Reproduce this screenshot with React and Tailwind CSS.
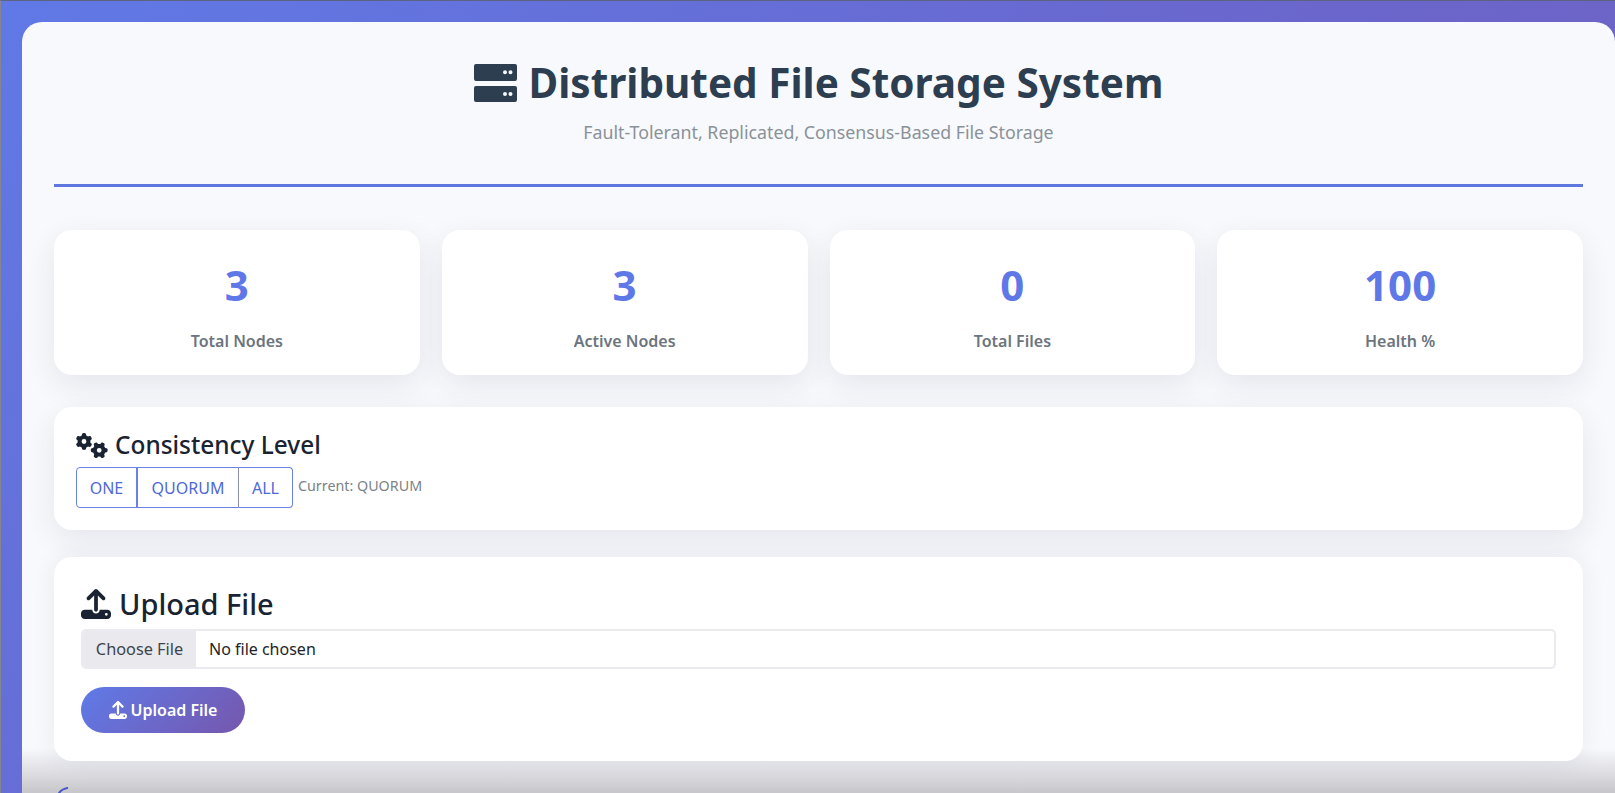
import React from "react";
import { FaGears, FaUpload } from "react-icons/fa6";

const stats = [
  ["3", "Total Nodes"],
  ["3", "Active Nodes"],
  ["0", "Total Files"],
  ["100", "Health %"],
];

const levels = [
  ["ONE", "w-[61px] rounded-l-[4px]"],
  ["QUORUM", "w-[103px] border-l-2 -ml-px"],
  ["ALL", "w-[55px] rounded-r-[4px] border-l-[#8a8fa8] -ml-px"],
];

function ServerIcon() {
  return (
    <svg className="h-[38px] w-[43px] shrink-0" viewBox="0 0 43 38" fill="currentColor">
      <path fillRule="evenodd" d="M2 0h39a2 2 0 0 1 2 2v13a2 2 0 0 1-2 2H2a2 2 0 0 1-2-2V2a2 2 0 0 1 2-2Zm29 6.2a2 2 0 1 0 0 4 2 2 0 0 0 0-4Zm5.5 0a2 2 0 1 0 0 4 2 2 0 0 0 0-4Z" />
      <path fillRule="evenodd" d="M2 22h39a2 2 0 0 1 2 2v12a2 2 0 0 1-2 2H2a2 2 0 0 1-2-2V24a2 2 0 0 1 2-2Zm29 6a2 2 0 1 0 0 4 2 2 0 0 0 0-4Zm5.5 0a2 2 0 1 0 0 4 2 2 0 0 0 0-4Z" />
    </svg>
  );
}

export default function App() {
  return (
    <div className="h-[793px] w-full overflow-hidden border-t border-l border-t-[#5b6380] border-l-[#85858f] bg-[linear-gradient(135deg,#6079e6_0%,#6a66cc_55%,#7660bc_100%)] pl-[21px] pt-[21px] font-['Noto_Sans',sans-serif]">
      <main className="relative h-[772px] rounded-t-[20px] bg-[#f8f9fc] px-8 pt-[29px]">
        <div className="absolute inset-x-0 bottom-0 h-[46px] bg-gradient-to-b from-[#e8e8ee00] via-[#dfdfe4] to-[#c6c6ca]" />

        <header className="relative border-b-[3px] border-[#5f78e0] pb-[40px] text-center">
          <h1 className="flex items-center justify-center gap-[12px] text-[40.5px] leading-[64px] font-bold text-[#2c3e50]">
            <ServerIcon />
            <span>Distributed File Storage System</span>
          </h1>
          <p className="mt-[5px] text-[17.8px] leading-[24px] text-[#8a9299]">
            Fault-Tolerant, Replicated, Consensus-Based File Storage
          </p>
        </header>

        <section className="relative mt-[43px] grid grid-cols-4 gap-[22px]">
          {stats.map(([value, label]) => (
            <div
              key={label}
              className="flex h-[145px] flex-col items-center rounded-[18px] bg-white pt-[25px] shadow-[0_10px_30px_rgba(30,40,80,0.09)]"
            >
              <div className="text-[42px] leading-[60px] font-bold text-[#5f78e8]">{value}</div>
              <div className="mt-[14px] text-[16px] leading-[24px] font-semibold text-[#6c757d]">{label}</div>
            </div>
          ))}
        </section>

        <section className="relative mt-[32px] h-[123px] rounded-[18px] bg-white pl-[22px] pt-[22px] shadow-[0_10px_30px_rgba(30,40,80,0.09)]">
          <h2 className="flex items-center gap-[7px] text-[24.4px] leading-[32px] font-medium text-[#1a2332]">
            <FaGears className="h-[29px] w-[32px]" />
            <span>Consistency Level</span>
          </h2>
          <div className="mt-[6px] flex items-start">
            <div className="flex h-[41px]">
              {levels.map(([name, extra]) => (
                <button
                  key={name}
                  className={`flex items-center justify-center border border-[#6a82e4] bg-white text-[16px] text-[#4f68d8] ${extra}`}
                >
                  {name}
                </button>
              ))}
            </div>
            <span className="ml-[5px] text-[14.3px] leading-[38px] text-[#7b8288]">Current: QUORUM</span>
          </div>
        </section>

        <section className="relative mt-[27px] h-[204px] rounded-[18px] bg-white px-[27px] pt-[27px] shadow-[0_0_24px_rgba(30,40,80,0.07)]">
          <h2 className="flex items-center gap-[8px] text-[29px] leading-[40px] font-medium text-[#1a2332]">
            <FaUpload className="h-[30px] w-[30px]" />
            <span>Upload File</span>
          </h2>
          <input
            type="file"
            className="mt-[5px] block h-[40px] w-full rounded-[5px] border-2 border-[#eaeaf1] text-[16px] leading-[36px] text-[#212529] file:mr-[13px] file:h-full file:w-[113px] file:border-0 file:bg-[#e9e9ee] file:text-[16.3px] file:text-[#3d444b]"
          />
          <button className="mt-[18px] flex h-[46px] w-[164px] items-center justify-center gap-[4px] rounded-full bg-[linear-gradient(135deg,#5f7ae8,#7657ad)] text-[16px] font-semibold text-white">
            <FaUpload className="h-[18px] w-[18px]" />
            Upload File
          </button>
        </section>

        <svg className="absolute bottom-0 left-[36px] h-[7px] w-[11px]" viewBox="0 0 11 7" fill="none">
          <path d="M0.5 7C2 4 5 1.8 10 0.8" stroke="#4a55c8" strokeWidth="2" />
        </svg>
      </main>
    </div>
  );
}
